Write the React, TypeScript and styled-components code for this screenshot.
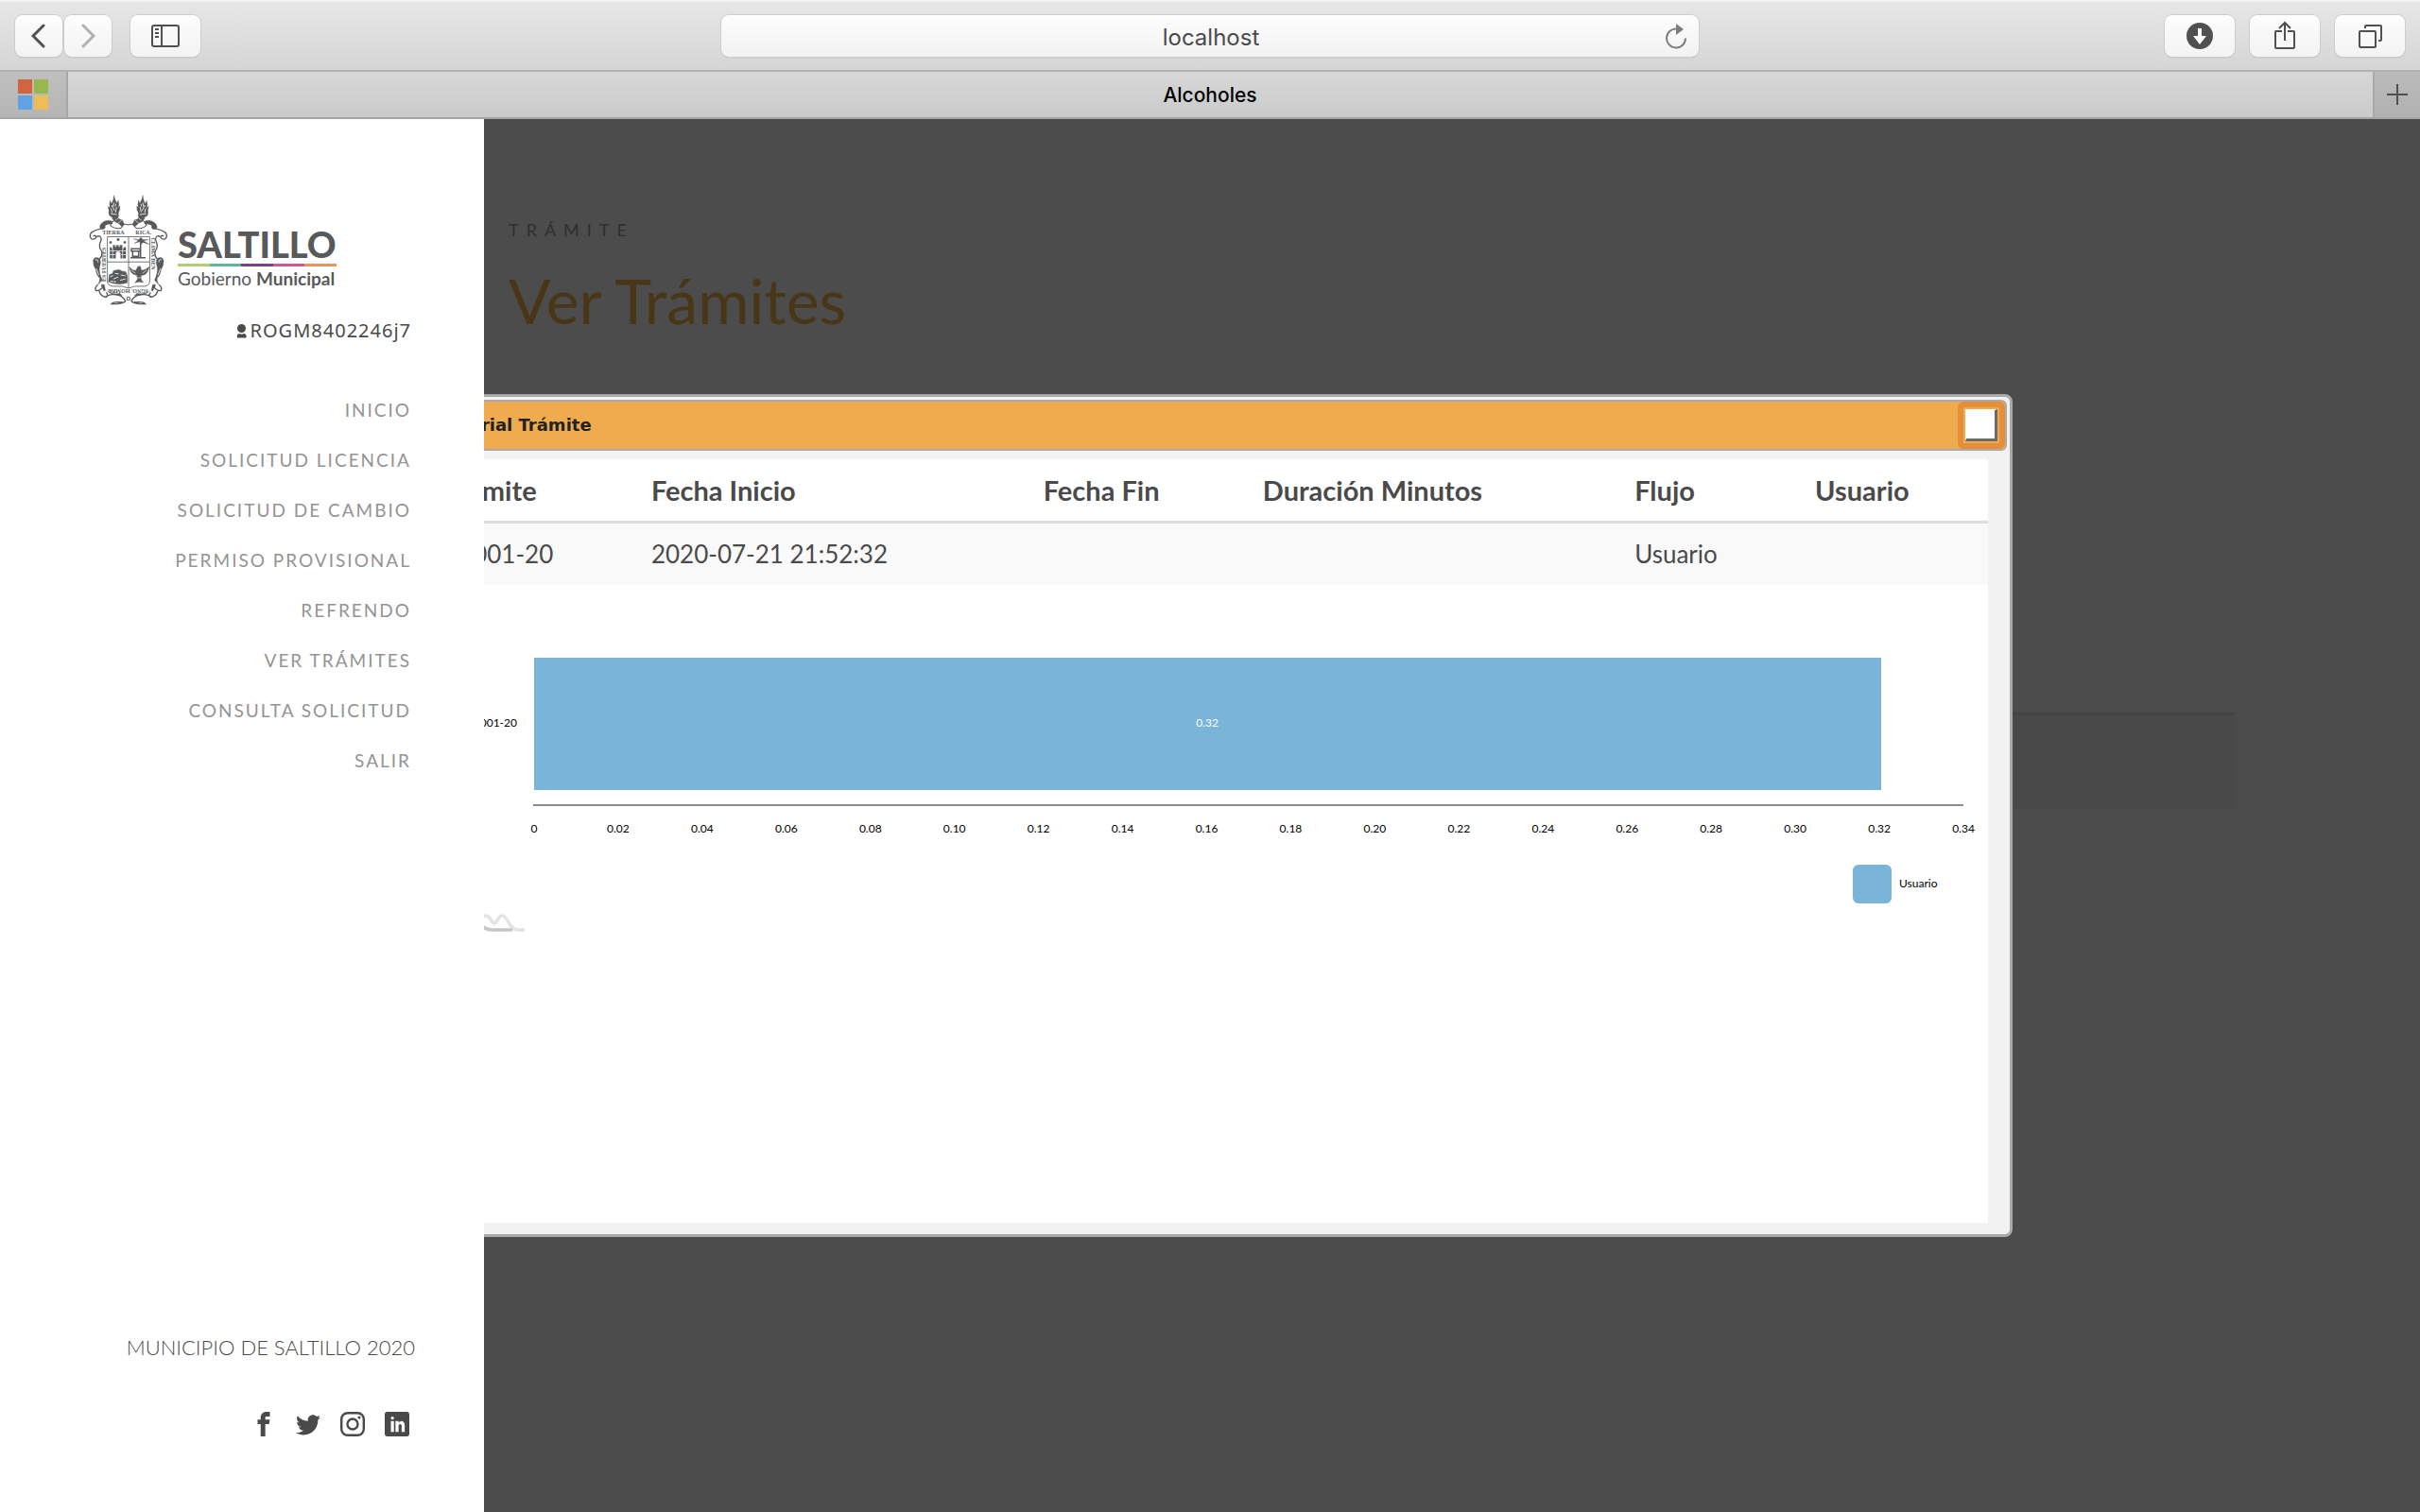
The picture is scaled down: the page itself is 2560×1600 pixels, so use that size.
import React from "react";
import styled, { createGlobalStyle } from "styled-components";
import { ImFacebook, ImTwitter, ImLinkedin } from "react-icons/im";

const GlobalStyle = createGlobalStyle`
  * { box-sizing: border-box; }
  body {
    margin: 0;
    background: #4c4c4c;
    color: #4a4a4a;
    font-family: Lato, "Open Sans", sans-serif;
  }
  button { font: inherit; padding: 0; margin: 0; }
`;

const Page = styled.div`
  min-height: 100vh;
  display: flex;
  flex-direction: column;
`;

/* ---------- browser chrome ---------- */

const Toolbar = styled.header`
  height: 76px;
  padding: 0 16px;
  display: grid;
  grid-template-columns: 1fr minmax(0, 1034px) 1fr;
  align-items: center;
  background: linear-gradient(#e7e7e7, #d5d5d5);
  border-top: 2px solid #f4f4f4;
  border-bottom: 2px solid #b1b1b1;
`;

const ToolGroup = styled.div<{ $end?: boolean }>`
  display: flex;
  gap: ${(p) => (p.$end ? "16px" : "20px")};
  justify-content: ${(p) => (p.$end ? "flex-end" : "flex-start")};
`;

const HistoryPair = styled.div`
  display: flex;
  gap: 2px;
`;

const ToolButton = styled.button<{ $narrow?: boolean }>`
  width: ${(p) => (p.$narrow ? "50px" : "74px")};
  height: 44px;
  display: grid;
  place-items: center;
  border: 0;
  border-radius: 8px;
  background: linear-gradient(#fdfdfd, #f3f3f3);
  box-shadow: 0 0 0 1px #cdcdcd, 0 1px 1px 0 #aaaaaa;
`;

const AddressBar = styled.div`
  position: relative;
  display: flex;
  height: 44px;
  border-radius: 8px;
  background: linear-gradient(#fdfdfd, #f2f2f2);
  box-shadow: 0 0 0 1px #cdcdcd, 0 1px 1px 0 #a4a4a4;
`;

const AddressInput = styled.input`
  flex: 1;
  min-width: 0;
  padding: 2px 0 0 2px;
  border: 0;
  background: transparent;
  text-align: center;
  color: #4a4a4a;
  font: 400 24px Inter, sans-serif;
`;

const ReloadButton = styled.button`
  position: absolute;
  right: 10px;
  top: 7px;
  width: 28px;
  height: 30px;
  border: 0;
  background: transparent;
`;

const TabBar = styled.nav`
  height: 50px;
  display: flex;
  background: linear-gradient(#d7d7d7, #cbcbcb);
  border-bottom: 2px solid #a4a4a4;
`;

const PinnedTab = styled.button`
  width: 72px;
  padding-left: 19px;
  display: flex;
  align-items: center;
  border: 0;
  border-right: 2px solid #a6a6a6;
  background: linear-gradient(#bfbfbf, #b5b5b5);
`;

const ActiveTab = styled.button`
  flex: 1;
  padding-right: 22px;
  border: 0;
  background: transparent;
  text-align: center;
  color: #000;
  font: 500 21px Inter, sans-serif;
`;

const AddTab = styled.button`
  width: 50px;
  display: grid;
  place-items: center;
  border: 0;
  border-left: 2px solid #a9a9a9;
  background: linear-gradient(#bababa, #b1b1b1);
`;

/* ---------- page shell ---------- */

const Shell = styled.div`
  position: relative;
  flex: 1;
  display: grid;
  grid-template-columns: 20% 1fr;
`;

const Sidebar = styled.aside`
  position: relative;
  z-index: 2;
  display: flex;
  flex-direction: column;
  align-items: flex-end;
  padding: 80px 77px 80px 94px;
  background: #fff;
`;

const Brand = styled.div`
  align-self: stretch;
  display: flex;
  align-items: flex-start;
  gap: 10px;
  color: #58595b;
`;

const BrandText = styled.div`
  padding-top: 32px;
  display: flex;
  flex-direction: column;
`;

const BrandName = styled.strong`
  font: 900 38px/41px Lato, sans-serif;
`;

const BrandStripe = styled.div`
  height: 3px;
  background: linear-gradient(
    90deg,
    #b0cf72 20%,
    #5cb795 20% 40%,
    #7b3f8c 40% 60%,
    #d9538f 60% 80%,
    #e8935a 80%
  );
`;

const BrandSub = styled.span`
  font: 400 19px/26px Lato, sans-serif;
`;

const User = styled.div`
  display: flex;
  align-items: center;
  gap: 4px;
  margin-top: 11px;
  font: 400 20px/32px "Noto Sans", sans-serif;
  letter-spacing: 1px;
  color: #4a4a4a;
`;

const Menu = styled.nav`
  margin-top: 41px;
  display: flex;
  flex-direction: column;
  align-items: flex-end;
`;

const MenuLink = styled.a`
  font-size: 19px;
  line-height: 53px;
  letter-spacing: 2px;
  color: #949494;
  text-decoration: none;
  text-transform: uppercase;
`;

const Footer = styled.footer`
  margin-top: auto;
  display: flex;
  flex-direction: column;
  align-items: flex-end;
  gap: 52px;
`;

const Copyright = styled.p`
  margin: 0 -4px 0 0;
  font-size: 22px;
  line-height: 32px;
  font-weight: 300;
  color: #4a4a4a;
`;

const Social = styled.div`
  display: flex;
  gap: 21px;
  margin-right: 2px;

  a {
    display: block;
    height: 26px;
    color: #4a4a4a;
    font-size: 26px;
  }
`;

const Main = styled.main`
  padding: 96px 196px 0 26px;
  background: #4c4c4c;
`;

const Kicker = styled.p`
  margin: 0;
  font-size: 18px;
  line-height: 42px;
  letter-spacing: 8px;
  color: #2f2f2f;
`;

const Heading = styled.h1`
  margin: 6px 0 0;
  font-size: 66px;
  line-height: 96px;
  font-weight: 400;
  color: #483616;
`;

const BackRow = styled.div`
  margin-top: 388px;
  height: 102px;
  border-top: 3px solid #434343;
  background: #494949;
`;

/* ---------- dialog ---------- */

const Dialog = styled.section`
  position: absolute;
  z-index: 1;
  top: 291px;
  left: 431px;
  right: 431px;
  padding: 3px;
  border: 3px solid #a9a9a9;
  border-radius: 8px;
  background: #f2f2f2;
`;

const TitleBar = styled.div`
  height: 54px;
  display: flex;
  align-items: stretch;
  justify-content: space-between;
  border: 2px solid #aaa;
  border-radius: 6px;
  background: #f0ab4e;
  overflow: hidden;
`;

const DialogTitle = styled.h2`
  margin: 0;
  padding-left: 17px;
  font: 700 18px/50px "DejaVu Sans", Verdana, sans-serif;
  color: #222;
`;

const CloseButton = styled.button`
  width: 50px;
  display: grid;
  place-items: center;
  border: 6px solid #e58f3a;
  border-radius: 6px;
  background: #f0ab4e;
`;

const CloseFace = styled.span`
  width: 34px;
  height: 34px;
  border-style: solid;
  border-width: 1px 3px 3px 1px;
  border-color: #fff #6b6b6b #6b6b6b #fff;
  background: #fff;
`;

const DialogBody = styled.div`
  margin: 9px 20px 9px;
  min-height: 808px;
  background: #fff;
`;

const HistoryTable = styled.table`
  width: 100%;
  table-layout: fixed;
  border-collapse: separate;
  border-spacing: 0;
  line-height: 41px;
  color: #4a4a4a;
`;

const HeadCell = styled.th<{ $w: string }>`
  width: ${(p) => p.$w};
  height: 68px;
  padding: 0 13px;
  border-bottom: 3px solid #dcdcdc;
  text-align: left;
  font-size: 29px;
  font-weight: 700;
  white-space: nowrap;
`;

const Cell = styled.td`
  height: 65px;
  padding: 0 13px;
  background: #f9f9f9;
  font-size: 26px;
  white-space: nowrap;
`;

const Chart = styled.svg`
  display: block;
  width: 100%;
  height: auto;
  font-family: Lato, sans-serif;
  font-size: 12px;
`;

/* ---------- drawings ---------- */

const HalfCrest = () => (
  <g>
    {/* torch */}
    <path
      d="M124 49 Q127 66 134 73 Q137 68 137 64 Q142 80 137 88 L143 84 Q144 96 138 104 L138 116 L124 122 L109 113 Q106 102 108 97 L105 84 L111 89 Q108 76 112 66 L116 76 Q123 64 124 49Z"
      fill="currentColor"
    />
    <path d="M124 72 L121 88 L126 98 M115 90 L118 104 M132 86 L129 103 M113 107 L133 110 M119 80 L117 86 M130 76 L128 84" stroke="#fff" strokeWidth="2.4" />
    <path d="M117 121 L135 113 L140 124 L150 127 L157 141 L150 149 L136 137 L127 133Z" fill="currentColor" />
    <path d="M128 129 L139 120 M136 138 L149 127" stroke="#fff" strokeWidth="2" />
    {/* upper scroll */}
    <path d="M170 143 Q160 138 150 143 Q151 154 138 154 Q122 154 112 144 Q117 134 124 128" fill="none" strokeWidth="3" />
    <path d="M118 131 Q98 124 84 138 Q74 151 84 157 Q96 158 97 148 Q92 143 89 150 Q101 137 118 140Z" fill="currentColor" />
    {/* shoulder */}
    <path d="M82 155 Q66 157 52 167 Q44 179 53 187 Q64 191 68 181 Q64 173 58 179 M68 181 Q82 172 84 190 Q72 212 85 226 Q88 242 78 250" fill="none" strokeWidth="4" />
    {/* side leaf */}
    <path d="M79 250 Q62 239 58 256 Q57 271 66 284 Q68 302 79 311 Q80 320 73 332 L87 318 Q76 295 78 279 Q84 260 79 250Z" fill="currentColor" />
    <path d="M65 253 Q74 251 73 261 M68 281 L76 302" stroke="#fff" strokeWidth="2.5" fill="none" />
    {/* lower scroll */}
    <path d="M73 332 Q61 341 67 351 Q76 352 86 343 Q89 338 84 336 M77 352 Q82 370 100 371 Q107 362 99 357 M95 372 Q108 362 128 362 Q154 367 160 384 Q151 393 116 393 Q123 384 151 388" fill="none" strokeWidth="4" />
    <path d="M84 331 L92 352 L97 350 L93 332Z M102 351 Q119 365 142 359 L150 366 Q120 369 102 351Z" fill="currentColor" />
  </g>
);

const Crest = () => (
  <svg width="84" height="117" viewBox="45 47 250 350" fill="none" stroke="currentColor" role="img" aria-label="Escudo de Saltillo">
    <HalfCrest />
    <g transform="translate(339 0) scale(-1 1)">
      <HalfCrest />
    </g>
    <circle cx="169.500" cy="376" r="5" strokeWidth="3" />
    <path d="M103 180 H237 V320 Q237 335 220 337 H190 L170 343 L150 337 H120 Q103 335 103 320Z M170 180 V343 M103 260 H237" strokeWidth="2.500" />
    {/* castle */}
    <path
      d="M111 248 V214 H116 V219 H121 V207 H127 V212 H132 V207 H138 V212 H143 V207 H150 V219 H155 V214 H161 V248 H145 V232 Q137 220 129 232 V248Z"
      fill="currentColor"
    />
    <path d="M111 225 H161 M120 219 V248 M151 219 V248 M111 237 H128 M146 237 H161" stroke="#fff" strokeWidth="2" />
    <circle cx="113" cy="198" r="3.500" fill="currentColor" />
    <circle cx="137" cy="189" r="4" fill="currentColor" />
    <circle cx="158" cy="198" r="3.500" fill="currentColor" />
    {/* tree and well */}
    <path d="M186 186 L201 190 L209 182 L215 189 L233 190 L217 193 L235 204 L215 198 L209 205 L206 196 L188 201 L201 193Z" fill="currentColor" />
    <path d="M208 196 V246 M179 218 H207 V226 H179Z M183 226 V242 H202 V226 M176 247 H224" strokeWidth="4.500" />
    {/* mountain */}
    <path d="M106 323 L109 300 L119 297 L122 288 L139 284 L150 289 L161 291 L166 304 V326 Q135 336 106 323Z" fill="currentColor" />
    <path d="M112 307 L121 303 M127 296 L139 298 M122 314 L137 308 M145 301 L160 304 M143 318 L160 314 M112 321 L131 323" stroke="#fff" strokeWidth="2.500" />
    {/* eagle */}
    <path
      d="M172 275 Q181 287 193 287 L199 275 L207 273 L211 287 Q224 286 235 275 Q232 295 219 301 L210 303 L210 316 L217 325 L203 323 L190 326 L198 315 L196 302 Q176 300 172 275Z"
      fill="currentColor"
    />
    <path d="M179 286 L192 296 M228 286 L214 296 M196 310 H211" stroke="#fff" strokeWidth="2" />
    {/* motto */}
    <g fill="currentColor" stroke="none" fontFamily="Liberation Serif, serif" fontWeight="700" fontSize="18">
      <text x="87" y="173">TIERRA</text>
      <text x="192" y="173">RICA.</text>
      <text transform="translate(98 322) rotate(-90)">ES FUERTES</text>
      <text transform="translate(242 183) rotate(90)">CLIMA BEN</text>
      <text transform="translate(231 345) rotate(180)">IGNO. HOMBR</text>
    </g>
  </svg>
);

const WindowsMark = () => (
  <svg width="32" height="32" viewBox="0 0 32 32" aria-hidden="true">
    <path fill="#d16541" d="M0 0h15v15H0z" />
    <path fill="#98b84e" d="M17 0h15v15H17z" />
    <path fill="#60a3e5" d="M0 17h15v15H0z" />
    <path fill="#edbd58" d="M17 17h15v15H17z" />
  </svg>
);

const InstagramMark = () => (
  <svg width="26" height="26" viewBox="0 0 26 26" fill="none" stroke="currentColor" strokeWidth="2.4" aria-hidden="true">
    <rect x="1.200" y="1.200" width="23.600" height="23.600" rx="6.500" />
    <circle cx="13" cy="13" r="5.500" />
    <circle cx="20" cy="6" r="1.600" fill="currentColor" stroke="none" />
  </svg>
);

const Glyph = styled.svg<{ $weight?: number; $dim?: boolean }>`
  display: block;
  fill: none;
  stroke: ${(p) => (p.$dim ? "#b0b0b0" : "#505050")};
  stroke-width: ${(p) => p.$weight ?? 2};
`;

const menu = [
  "Inicio",
  "Solicitud Licencia",
  "Solicitud de Cambio",
  "Permiso Provisional",
  "Refrendo",
  "Ver Trámites",
  "Consulta Solicitud",
  "Salir",
];

const columns = [
  { label: "Trámite", width: "13.3%", value: "00001-20" },
  { label: "Fecha Inicio", width: "25.2%", value: "2020-07-21 21:52:32" },
  { label: "Fecha Fin", width: "14.1%", value: "" },
  { label: "Duración Minutos", width: "23.9%", value: "" },
  { label: "Flujo", width: "11.6%", value: "Usuario" },
  { label: "Usuario", width: "11.9%", value: "" },
];

const ticks = Array.from({ length: 18 }, (_, i) => (i === 0 ? "0" : (i * 0.02).toFixed(2)));
const AXIS_START = 108;
const AXIS_END = 1620;

const HistoryChart = () => (
  <Chart viewBox="0 0 1646 400" role="img" aria-label="Duración por usuario">
    <rect x="108" y="77" width="1425" height="140" fill="#7ab4d8" />
    <text x="820" y="150" textAnchor="middle" fill="#fff">0.32</text>
    <text x="90" y="150" textAnchor="end">00001-20</text>
    <path d="M107 233H1620" stroke="#8c8c8c" strokeWidth="2" />
    {ticks.map((t, i) => (
      <text key={t} x={AXIS_START + ((AXIS_END - AXIS_START) * i) / 17} y="262" textAnchor="middle">
        {t}
      </text>
    ))}
    <rect x="1503" y="296" width="41" height="41" rx="6" fill="#7ab4d8" />
    <text x="1552" y="320">Usuario</text>
    <g fill="none" strokeWidth="3.500">
      <path d="M34 365 C48 365 50 350 57 350 C62 350 63 358 66 358 C69 358 70 350 74 350 C80 350 82 365 90 365 H98" stroke="#e3e3e3" />
      <path d="M30 349 C46 349 50 365 63 365 H85" stroke="#c6c6c6" />
    </g>
  </Chart>
);

export default function App() {
  return (
    <Page>
      <GlobalStyle />
      <Toolbar>
        <ToolGroup>
          <HistoryPair>
            <ToolButton $narrow aria-label="Atrás">
              <Glyph $weight={3} width="16" height="26" viewBox="0 0 16 26">
                <path d="M13 2 2 13l11 11" strokeLinecap="round" />
              </Glyph>
            </ToolButton>
            <ToolButton $narrow aria-label="Adelante">
              <Glyph $weight={3} $dim width="16" height="26" viewBox="0 0 16 26">
                <path d="M3 2l11 11L3 24" strokeLinecap="round" />
              </Glyph>
            </ToolButton>
          </HistoryPair>
          <ToolButton aria-label="Barra lateral">
            <Glyph width="30" height="24" viewBox="0 0 30 24">
              <rect x="1" y="1" width="28" height="22" rx="2" />
              <path d="M11 1v22M4 5h4M4 9h4M4 13h4" />
            </Glyph>
          </ToolButton>
        </ToolGroup>
        <AddressBar>
          <AddressInput aria-label="Dirección" defaultValue="localhost" />
          <ReloadButton aria-label="Recargar">
            <svg width="28" height="30" viewBox="0 0 28 30" fill="none">
              <path d="M15 7.500a10 10 0 1 0 9 10" stroke="#7d7d7d" strokeWidth="2" />
              <path d="M14 2l8 6-8 6z" fill="#7d7d7d" />
            </svg>
          </ReloadButton>
        </AddressBar>
        <ToolGroup $end>
          <ToolButton aria-label="Descargas">
            <svg width="28" height="28" viewBox="0 0 28 28">
              <circle cx="14" cy="14" r="14" fill="#505050" />
              <path d="M12 6h4v8h5l-7 9-7-9h5z" fill="#fff" />
            </svg>
          </ToolButton>
          <ToolButton aria-label="Compartir">
            <Glyph width="24" height="32" viewBox="0 0 24 32">
              <path d="M9 11H2.500Q2 11 2 12v16q0 1 1 1h18q1 0 1-1V12q0-1-1-1h-6M12 21V2M6 8l6-6 6 6" />
            </Glyph>
          </ToolButton>
          <ToolButton aria-label="Pestañas">
            <Glyph width="26" height="26" viewBox="0 0 26 26">
              <rect x="2" y="8" width="17" height="17" rx="1" />
              <path d="M8 5V3q0-1 1-1h15q1 0 1 1v14q0 1-1 1h-2" />
            </Glyph>
          </ToolButton>
        </ToolGroup>
      </Toolbar>
      <TabBar>
        <PinnedTab aria-label="Pestaña fijada">
          <WindowsMark />
        </PinnedTab>
        <ActiveTab>Alcoholes</ActiveTab>
        <AddTab aria-label="Nueva pestaña">
          <Glyph width="22" height="22" viewBox="0 0 22 22">
            <path d="M11 0v22M0 11h22" />
          </Glyph>
        </AddTab>
      </TabBar>

      <Shell>
        <Sidebar>
          <Brand>
            <Crest />
            <BrandText>
              <BrandName>SALTILLO</BrandName>
              <BrandStripe />
              <BrandSub>
                Gobierno <b>Municipal</b>
              </BrandSub>
            </BrandText>
          </Brand>
          <User>
            <svg width="11" height="15" viewBox="0 0 11 15" fill="#4a4a4a" aria-hidden="true">
              <circle cx="5.500" cy="4.500" r="4.500" />
              <path d="M1 14.500Q0 10 3 10q2.500 1 5 0 3 0 2.500 4.500z" />
            </svg>
            ROGM8402246j7
          </User>
          <Menu>
            {menu.map((m) => (
              <MenuLink key={m} href="#">
                {m}
              </MenuLink>
            ))}
          </Menu>
          <Footer>
            <Copyright>MUNICIPIO DE SALTILLO 2020</Copyright>
            <Social>
              <a href="#" aria-label="Facebook"><ImFacebook /></a>
              <a href="#" aria-label="Twitter"><ImTwitter /></a>
              <a href="#" aria-label="Instagram"><InstagramMark /></a>
              <a href="#" aria-label="LinkedIn"><ImLinkedin /></a>
            </Social>
          </Footer>
        </Sidebar>

        <Main>
          <Kicker>TRÁMITE</Kicker>
          <Heading>Ver Trámites</Heading>
          <BackRow />
        </Main>

        <Dialog role="dialog" aria-labelledby="dialog-title">
          <TitleBar>
            <DialogTitle id="dialog-title">Historial Trámite</DialogTitle>
            <CloseButton aria-label="Cerrar">
              <CloseFace />
            </CloseButton>
          </TitleBar>
          <DialogBody>
            <HistoryTable>
              <thead>
                <tr>
                  {columns.map((c) => (
                    <HeadCell key={c.label} $w={c.width}>{c.label}</HeadCell>
                  ))}
                </tr>
              </thead>
              <tbody>
                <tr>
                  {columns.map((c) => (
                    <Cell key={c.label}>{c.value}</Cell>
                  ))}
                </tr>
              </tbody>
            </HistoryTable>
            <HistoryChart />
          </DialogBody>
        </Dialog>
      </Shell>
    </Page>
  );
}
